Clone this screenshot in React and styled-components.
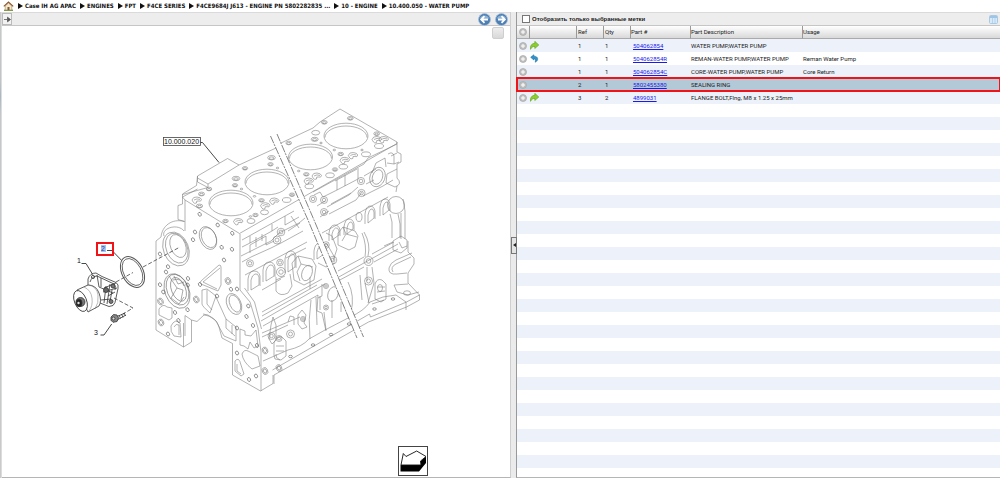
import React, { useState } from "react";
import styled, { createGlobalStyle } from "styled-components";

const GlobalStyle = createGlobalStyle`
  * { box-sizing: border-box; }
  body {
    margin: 0;
    background: #fff;
    color: #222;
    font-family: Roboto, "Liberation Sans", sans-serif;
    font-size: 6px;
  }
  button { font: inherit; padding: 0; cursor: pointer; }
`;

const Page = styled.div`
  display: flex;
  flex-direction: column;
  height: 100vh;
`;

const Breadcrumbs = styled.nav`
  display: flex;
  align-items: center;
  flex: none;
  height: 12px;
  padding-left: 3px;
  gap: 4px;
  font: bold 6px/12px "DejaVu Sans Condensed", "Noto Sans", sans-serif;
  white-space: nowrap;
`;

const HomeLink = styled.a`
  display: flex;
  width: 11px;
`;

const Crumb = styled.a`
  display: flex;
  align-items: center;
  gap: 2px;
  color: #111;
  text-decoration: none;
`;

const Workspace = styled.main`
  flex: 1;
  min-height: 0;
  display: grid;
  grid-template-columns: 2px minmax(0, 509fr) 5px minmax(0, 484fr);
  background: #ededed;
`;

const Edge = styled.div`
  background: linear-gradient(#c9c9c9, #c0c4c8 15%, #a9b8c6 18%, #c4c8cc 22%, #cacaca);
  border-right: 1px solid #dcdcdc;
`;

const Pane = styled.section`
  display: flex;
  flex-direction: column;
  min-height: 0;
  border-bottom: 1px solid #b5b5b5;
`;

const DiagramPane = styled(Pane)`
  border-right: 1px solid #cfcfcf;
`;

const PartsPane = styled(Pane)`
  border-left: 1px solid #999;
`;

const Toolbar = styled.div`
  display: flex;
  align-items: center;
  flex: none;
  height: 14px;
  gap: 4px;
  padding: 0 ${(p) => p.$end}px 0 ${(p) => p.$start}px;
  background: #ededed;
  border-top: 1px solid #dadada;
  border-bottom: 1px solid #c6c6c6;
`;

const Spacer = styled.span`
  flex: 1;
`;

const PinButton = styled.button`
  display: flex;
  align-items: center;
  justify-content: center;
  width: 10px;
  height: 12px;
  background: #f2f2f2;
  border: 1px solid #bbb;
`;

const RoundButton = styled.button`
  display: flex;
  width: 13px;
  height: 13px;
  border: 0;
  background: none;
`;

const Canvas = styled.div`
  position: relative;
  flex: 1;
  min-height: 0;
  background: #fff;
`;

const Drawing = styled.svg`
  display: block;
  width: 100%;
  height: 100%;
`;

const CanvasButton = styled.button`
  position: absolute;
  top: 1px;
  right: 6px;
  width: 12px;
  height: 12px;
  border: 1px solid #cfcfcf;
  border-radius: 2px;
  background: linear-gradient(#eee, #d8d8d8);
`;

const Splitter = styled.div`
  display: flex;
  align-items: center;
  background: #ebebeb;
`;

const SplitHandle = styled.button`
  position: relative;
  z-index: 1;
  display: flex;
  align-items: center;
  justify-content: center;
  flex: none;
  width: 6px;
  height: 17px;
  border: 1px solid #777;
  background: #e4e4e4;
`;

const FilterLabel = styled.label`
  display: flex;
  align-items: center;
  gap: 2px;
  font: bold 6px/12px "Liberation Sans", sans-serif;
  color: #222;
`;

const Tick = styled.input`
  appearance: none;
  width: 8px;
  height: 8px;
  margin: 0;
  border: 1px solid #777;
  background: #fff;
  &:checked { background: #5c92c4; }
`;

const IconButton = styled.button`
  display: flex;
  border: 0;
  background: none;
`;

const PartsTable = styled.table`
  flex: none;
  width: 100%;
  table-layout: fixed;
  border-collapse: separate;
  border-spacing: 0;
`;

const HeadCell = styled.th`
  height: 13px;
  padding: 0 0 0 ${(p) => p.$pad || 0}px;
  text-align: left;
  font-weight: normal;
  line-height: 12px;
  border-bottom: 1px solid #aaa;
  border-right: 1px solid #999;
  background: linear-gradient(#fff, #d9d9d9);
  white-space: nowrap;
  &:last-child { border-right: 0; }
`;

const Row = styled.tr`
  background: ${(p) => (p.$selected ? "#b4c9d8" : p.$tint ? "#edf2fa" : "#fff")};
  outline: ${(p) => (p.$selected ? "2px solid #f01418" : "none")};
  outline-offset: -1px;
`;

const Cell = styled.td`
  height: 13px;
  padding: 0 0 0 ${(p) => p.$pad || 0}px;
  line-height: 13px;
  white-space: nowrap;
`;

const PartLink = styled.a`
  color: #1a1aee;
  text-decoration: underline;
`;

const EmptyRows = styled.div`
  flex: 1;
  background: repeating-linear-gradient(#fff 0 13px, #edf2fa 13px 26px);
`;

const Icon = styled.svg`
  display: block;
`;

const crumbs = [
  "Case IH AG APAC",
  "ENGINES",
  "FPT",
  "F4CE SERIES",
  "F4CE9684J J613 - ENGINE PN 5802282835 ...",
  "10 - ENGINE",
  "10.400.050 - WATER PUMP",
];

const parts = [
  { ref: 1, qty: 1, number: "504062854", text: "WATER PUMP,WATER PUMP", usage: "", icon: "next" },
  { ref: 1, qty: 1, number: "504062854R", text: "REMAN-WATER PUMP,WATER PUMP", usage: "Reman Water Pump", icon: "back" },
  { ref: 1, qty: 1, number: "504062854C", text: "CORE-WATER PUMP,WATER PUMP", usage: "Core Return" },
  { ref: 2, qty: 1, number: "5802455380", text: "SEALING RING", usage: "", selected: true },
  { ref: 3, qty: 2, number: "4899031", text: "FLANGE BOLT,Flng, M8 x 1.25 x 25mm", usage: "", icon: "next" },
];

const HomeIcon = () => (
  <Icon width="11" height="10" viewBox="0 0 11 10">
    <path d="M1 9.3h9" stroke="#6a9c3a" strokeWidth="1.3" />
    <path d="M2.2 5v4h6.6V5L5.500 2z" fill="#f4e6c8" stroke="#a58a60" strokeWidth=".6" />
    <path d="M.8 5.400 5.500 1l4.700 4.400" fill="none" stroke="#8a5a35" strokeWidth="1.200" />
    <path d="M4.500 9V6h2v3z" fill="#7a5a3a" />
  </Icon>
);

const RoundArrow = ({ flip }) => (
  <Icon width="13" height="13" viewBox="0 0 13 13">
    <circle cx="6.500" cy="6.500" r="6" fill="#4d7fb5" stroke="#a9bfd6" strokeWidth=".8" />
    <path d="M1.800 5.500a5 4.500 0 0 1 9.400 0z" fill="#8db2d8" />
    <path
      d="M10 6.500H3.500M6.500 3.200 3.200 6.500l3.300 3.300"
      fill="none"
      stroke="#fff"
      strokeWidth="1.800"
      transform={flip ? "matrix(-1 0 0 1 13 0)" : undefined}
    />
  </Icon>
);

const Plus = () => (
  <Icon width="8" height="8" viewBox="0 0 8 8">
    <circle cx="4" cy="4" r="3.500" fill="#c0c0c0" stroke="#a8a8a8" strokeWidth=".7" />
    <path d="M4 2v4M2 4h4" stroke="#fff" strokeWidth="1" />
  </Icon>
);

const RowIcon = ({ kind }) =>
  kind === "next" ? (
    <Icon width="9" height="9" viewBox="0 0 9 9">
      <path d="M.4 8.400C0 4.500 2 2.300 4.800 2.300V.3l4 3.700-4 3.500V5.400C2.800 5.400 1.400 6.400.4 8.400z" fill="#8ccf2c" stroke="#5f9c1e" strokeWidth=".6" />
    </Icon>
  ) : (
    <Icon width="9" height="9" viewBox="0 0 9 9">
      <path d="M3.800.8.7 3.300l3.100 2.700V4.700c1.500 0 2 1 1.400 3.500C8.700 6.700 8.700 2.200 3.800 2.200z" fill="#2f93cc" stroke="#1e6d9f" strokeWidth=".6" />
    </Icon>
  );

const GridIcon = () => (
  <Icon width="9" height="9" viewBox="0 0 9 9">
    <rect x=".5" y=".5" width="8" height="8" rx="1" fill="#d8e9f8" stroke="#a9c8e4" />
    <path d="M1 2h7" stroke="#8bb8df" strokeWidth="1.500" />
    <path d="M3.500 3v5M6 3v5" stroke="#a9cdec" strokeWidth=".8" />
  </Icon>
);

/* Centres of the four cylinder bores on the deck. */
const bores = [[231, 203], [267, 182], [310.5, 157], [346, 136]];

/* Deck passages: x, y, rx, ry. */
const deckHoles = [
  [209, 189, 2.8, 1.8], [201.500, 194, 3, 1.9], [199.500, 206, 3.200, 1.9], [236, 178.500, 3.800, 2.200], [235, 185.300, 2.700, 1.700],
  [245, 168.300, 2.700, 1.700], [241.500, 189, 1.300, .8], [254.500, 196.300, 1.300, .8], [261.500, 200.300, 2.800, 1.700],
  [264.500, 212.300, 4, 2.400], [255.500, 215, 2.700, 1.700], [250.500, 216.500, 1.300, .8], [251, 221, 4, 2.500], [225.500, 221, 2.800, 1.700],
  [271.500, 157.700, 3.800, 2.200], [270.500, 164.300, 2.700, 1.700], [277.500, 168, 1.300, .8], [324.300, 122.300, 2.900, 1.800],
  [350.300, 118.300, 2.900, 1.800], [376.700, 133.700, 2.900, 1.800], [379, 146, 4.500, 2.500], [315.700, 132.700, 4, 2.300],
  [314.700, 139.300, 3.500, 2], [288.700, 143, 2.800, 1.800], [321, 143, 1.300, .8], [334.300, 150, 1.300, .8], [362, 150, 1.300, .8],
  [366, 154.300, 4.500, 2.400], [340.700, 154, 2.800, 1.700], [343.300, 166.700, 4.300, 2.300], [335, 169.500, 2.700, 1.700],
  [330, 175.300, 4.300, 2.400], [309.300, 186.300, 4.300, 2.400], [306.300, 174.300, 2.800, 1.700], [298.700, 171, 1.300, .8],
  [286.700, 200, 4.300, 2.400], [292, 194.700, 2.700, 1.700],
];

const kidneys = [[197, 200], [265.500, 205.700], [274.500, 201], [238.500, 221.500], [353.300, 155.500], [345, 160.300], [317, 176], [309, 181], [377, 139.500], [384, 139.500]];

/* Bolt holes on the front face. */
const faceHoles = [
  [199.700, 214.300], [217.700, 225], [232.300, 233.300], [195, 232], [193, 239.700], [221.700, 247.300], [232, 249.300], [160, 254],
  [224, 260], [168, 266.700], [166, 272], [160, 284.700], [163.300, 292], [188, 278.500], [187.700, 285], [200, 284.500], [217, 296],
  [231, 289.300], [237, 289], [187.500, 309.700], [175, 312.500], [178.500, 320.500], [248.300, 306], [246.500, 316.500], [253, 325.500],
  [237, 328], [237, 353], [257, 345.500], [168, 334], [256, 376], [249, 379.500],
];

const wideFaceHoles = [[228, 281], [196.300, 299.500], [160.500, 301.500], [161, 322.500], [265, 350.500], [265, 371], [279, 368]];

/* Bosses on the side: x, y, r. */
const bosses = [
  [250, 263.300, 3.500], [281, 272, 4.500], [281, 232, 3.800], [277, 240, 4], [361, 181, 3.600], [361.500, 193, 3.600], [324, 200, 3.500],
  [324, 212, 3.500], [313, 199, 3.500], [280, 262.500, 3.300], [368.500, 261, 4.500], [368.500, 281, 4], [290.500, 334, 4], [279, 338.500, 3],
  [333, 260, 3.800], [271.500, 336, 3.500], [326, 307.500, 2.500], [326, 286, 2.500], [303, 319, 2.500], [326, 245, 3.300],
];

const railHoles = [[290.500, 356.500], [313, 345], [331, 334.500], [349, 324], [374.500, 309], [393, 299]];

/* Arched windows along the water jacket: x, y, w, h. */
const arches = [[248, 271, 12, 20], [263, 262, 12, 20], [285, 251, 11, 22], [314, 243, 11, 17], [329, 225, 11, 16], [344, 219, 10, 16], [365, 206, 10, 18], [380, 199, 10, 17]];

const Engine = () => (
  <g fill="none" stroke="#808080" strokeWidth=".6" strokeLinejoin="round">
    <path d="M185 200 182.500 197V194l14-8.500 1-9.500 30-17.500 11.500 6.500L276 148l5-5 32-15 7-6 20-13 57 33v1.500L239.500 233.500 185 200" />
    <path d="M197.500 176v6l10.500 5.500v-3.500L197.500 178M208 184l31-19M182.500 194.500l25.500-7M182.500 197l15-8M182.500 197v7l-4.500 1.500v14l6.500 2M185 200v31" />
    {bores.map(([x, y]) => (
      <g key={x}>
        <ellipse cx={x} cy={y} rx="22" ry="12.800" />
        <path d={`M${x - 21} ${y + 1.500}a21 11.500 0 0 1 42 0`} />
      </g>
    ))}
    {deckHoles.map(([x, y, rx, ry]) => (
      <g key={`${x}-${y}`}>
        <ellipse cx={x} cy={y} rx={rx} ry={ry} />
        {rx > 2 && rx < 3.900 && <ellipse cx={x} cy={y + 0.400} rx={rx * 0.600} ry={ry * 0.550} />}
      </g>
    ))}
    {kidneys.map(([x, y]) => (
      <path key={`${x}-${y}`} d={`M${x - 5} ${y}q1-3.500 5-3t4.500 2.500q-.5 2.500-3 1.500t-2 2q-2 1-3-.5t-1.500-2.500M${x - 3} ${y}q3-2 6-.5`} />
    ))}

    <path d="M184.500 221.500C172 218 162 226 161 237l-5 4v89l27.500 17 8-5v-22l-6.500-4.500V336M183.500 347v-24M191.500 320l5.500 1.500 7-6.500c8 1 13 5 15 12l3 11 10.500 5.500V375l28 16 12.500-7.500V375M261 391V352" />
    <path d="M240 234v56l10 12 8 26 3 24M244.500 288l10 14 7 27M164 236c-3-8 14-13 20-5" />
    <g transform="rotate(-22 176 249)">
      <ellipse cx="176" cy="249" rx="12.500" ry="17.500" />
      <ellipse cx="177" cy="248.500" rx="10.500" ry="15.500" />
      <ellipse cx="179" cy="247" rx="7.500" ry="12" />
    </g>
    <g transform="rotate(-22 177 291)" stroke="#707070">
      <ellipse cx="177" cy="291" rx="12" ry="18" />
      <ellipse cx="178" cy="290" rx="10.500" ry="16" />
      <ellipse cx="179" cy="290" rx="7" ry="12.500" />
    </g>
    <path d="M169 276l8 12-6 10M177 288l6 2-2 10M173 280q8-3 11 6M171 298l8 6 5-7M174 276l4 8 6-2" stroke="#707070" />
    <g transform="rotate(-24 208 238)">
      <ellipse cx="208" cy="238" rx="8" ry="12" />
      <ellipse cx="209" cy="238" rx="7" ry="10.500" />
    </g>
    <g transform="rotate(-24 234 304)">
      <ellipse cx="234" cy="304" rx="7" ry="11" />
      <ellipse cx="235" cy="304" rx="5" ry="9" />
    </g>
    <path d="M219 265q2 0 2 2v18l-3 6-17-7q-2-1 0-3zM220 268l-17 14 14 7" />
    <path d="M202 290l5-1 9 7-6 17q-8-7-8-9zM207 290v14l5 6M216 297l10 22 10 8v14l-12-5-8-15-8-6-5-1M226 319v9l9 8M232 325v9" />
    <path d="M159 309q4-6 8-2l5 1v10l-3 2-10-5zM171 326q4-8 9-3l1 14-7-1q-4-4-3-10M174 327q2-4 5-2v10" />
    <path d="M240 329l5 2v4l6 1 5-6 2 16-4 2-4-6-2 7-4-3-4-1zM242 354q2-5 6-3l10 5 2 10-8 3q-9-7-10-15M235 361q4-5 6 4l3 9-3 2-6-5zM237 364v7l4 3" />
    {faceHoles.map(([x, y]) => (
      <ellipse key={`${x}-${y}`} cx={x} cy={y} rx="1.500" ry="2" stroke="#555" transform={`rotate(-25 ${x} ${y})`} />
    ))}
    {wideFaceHoles.map(([x, y]) => (
      <g key={`${x}-${y}`} transform={`rotate(-25 ${x} ${y})`}>
        <ellipse cx={x} cy={y} rx="2.700" ry="3.500" />
        <ellipse cx={x} cy={y} rx="1.500" ry="2.200" />
      </g>
    ))}

    <path d="M242 240l52-29M242 247l8-4v-7M250 243l22-12v-7M272 231l6-4M241 256l30-15 8-8 20-10 6-5M250 253v-8l16-9v9M242 262l9-5 20-9 10-5 22-12M266 245l8-4M285 216v9l14-8M256 237v10M262 234v7M288 231l12-8M291 216l8 12" />
    <path d="M313 192l51-28 4-6 29-14M314 195l6-3 3 5 14-7v-10M337 190l21-11v-11M345 186v-11M327 207l22-12 9-8M329 214l27-14 6-8M317 206l8-5M320 217l9-6M331 204l20-11M335 181l22-12M364 176l12-7M366 184l8-4M363 196l20-10 10-6M372 173l4-10 9-5 1 9" />
    <ellipse cx="377.500" cy="177" rx="7.500" ry="10" transform="rotate(20 377.500 177)" />
    <ellipse cx="377.500" cy="177" rx="5" ry="7.500" transform="rotate(20 377.500 177)" />
    <path d="M397 142v10l4 2v8l-4 2v14q6 6-2 9l-9-4 1-9 10-5M388 154q5-3 6 2v8l-7-1M396 192l1-6M391 156l6-3M394 164l5-2" />
    <circle cx="396" cy="205" r="8.500" />
    <path d="M245 275l62-33M322 233l66-36M306 248l-20 10M403 199l2 12v28M401 213v26M407 240v8l-6 5-8-3v-9l8-5zM393 242l-9 4M399 242l3 6 5-2M390 214l2 8v16M398 214l2 10v14" />
    {arches.map(([x, y, w, h]) => (
      <path key={x} d={`M${x} ${y + h}V${y + 8}q1-8 ${w / 2}-8t${w / 2} 5v${h - 10}M${x + 3} ${y + h - 1}V${y + 9}q1-5 ${w / 2 - 2}-6t${w / 2 - 2} 3v${h - 12}z`} />
    ))}
    <path d="M292 263l6-7 14 3 4 7-2 14-10 5-10-5zM298 256l3 8 12 3M301 264l-4 8 3 9M338 233l5-6 12 4 3 5-3 11-6 3-11-5zM343 227l3 7 11 3M346 234l-4 7M276 277v14q4 6 12 2l4-7-2-12M276 280l9-4M262 290l19-11" />
    <ellipse cx="307" cy="273" rx="5" ry="8" transform="rotate(20 307 273)" />
    <ellipse cx="359" cy="217" rx="3" ry="4.500" />
    <path d="M326 233l6 3 5 13-4 12M319 248l8-4 8 14M318 263l8 4 9-4M310 277v12" />

    <path d="M262 312l60-33M262 316l55-31M261 321l64-37M263 326l55-31M337 278l61-34M338 281l26-14M374 262l24-13M338 271l26-14M372 254l22-12M318 295l-1 16 5 2 4 18M322 284v12l-4 2M320 296v14M324 312l2 18" />
    <path d="M362 233q5 12 3 24M364 232q7 12 4 24M367 267v14M372 267l2 16-6 20M365 283l4 20M360 275l2 25M337 287l12 32M348 282q7 14 3 30M311 300q-3 20-1 39M316 297l1 28M332 300v18M341 302v10" />
    <ellipse cx="333" cy="294" rx="5" ry="7.500" transform="rotate(20 333 294)" />
    <path d="M407 273l-10 1q-9 1-8-6 1-5 7-8l16-7M393 272q-3-5 3-8l15-7M408 241v11l6 6v6l-6 9v10l11.500 12v5l-13 7-38 15-94.500 53v9M419.500 295l-13 7-36 15-1-3-97 56" />
    <path d="M288 350q14-3 21-11l16-9 25-13q14-6 20-15l13-5 13-2 10 7v8M263 361l25-11M372 304l12-4M394 285l14-1M394 285l3 7 11 3 11-3" />
    <path d="M375 299v-15q2-6 7-4l4 4v15l-5 3zM377 287h8M377 292l8-1M274 355v-12q3-8 8-6l4 4v15l-5 4-6-1zM276 346h8M276 351h8M280 360q-5-2-4-6M298 315l4-5 4 5-2 8 3 4-5 2-4-5zM262 333l38-16M262 337l26-12M288 322l2-6 4 1v8M271 325l2-8 3 8v15l-4 4-3-5z" />
    <ellipse cx="407" cy="293" rx="3.500" ry="2.200" />
    <ellipse cx="380" cy="288" rx="2.500" ry="3.500" />
    {bosses.map(([x, y, r]) => (
      <g key={`${x}-${y}`}>
        <circle cx={x} cy={y} r={r} />
        <circle cx={x} cy={y} r={r * 0.500} />
      </g>
    ))}
    {railHoles.map(([x, y]) => (
      <ellipse key={x} cx={x} cy={y} rx="1.800" ry="1.200" stroke="#555" />
    ))}
    <path d="M270 135 308 220 357 338 363 337 314 220 277 134z" fill="#fff" stroke="none" />
    <path d="M270.500 136 308 220l49 118M277 134l37 86 49.500 117" stroke="#666" strokeWidth=".8" strokeDasharray="8 1 2 1" />
  </g>
);

const Pump = () => (
  <g fill="none" stroke="#333" strokeWidth=".8" strokeLinejoin="round">
    <path d="M88 286v-7q2-6 8-6l6 3.500 14 6q3 2 2 6l-3 14q-1 4-6 4l-9-3.500" fill="#fff" />
    <path d="M90 282q2-6 7-6l17 8q2 2 1 6M97 275l2 12M101 278v9M104 288l12-5M103 292l14-4M106 286l-2 17M110 284l-3 20M112 290l-2 12M99 287l14 6M108 296l7-4M101 300l10-1" />
    <circle cx="113" cy="286" r="2" fill="#777" />
    <circle cx="111" cy="301.500" r="2" fill="#777" />
    <circle cx="93" cy="277" r="1.600" />
    <circle cx="106" cy="290" r="2.500" fill="#666" />
    <path d="M77 290l11-5q8 0 11 8t0 13l-11 6z" fill="#fff" />
    <path d="M89 285q8 2 9 10t-3 14M84 287q7 3 8 11t-3 13" stroke="#777" strokeWidth=".5" />
    <ellipse cx="80.500" cy="301" rx="6" ry="11" fill="#fff" transform="rotate(-22 80.500 301)" />
    <circle cx="80.500" cy="302" r="4.500" fill="#777" />
    <ellipse cx="79" cy="303" rx="3" ry="3.800" fill="#222" />
    <circle cx="78.500" cy="303" r="1.200" fill="#ddd" stroke="none" />
    <g transform="rotate(-28 132.500 272)" stroke="#555">
      <ellipse cx="132.500" cy="272" rx="10.500" ry="16.500" strokeWidth="1" />
      <ellipse cx="132.500" cy="272" rx="8.800" ry="14.500" strokeWidth=".8" />
    </g>
    <path d="M116 282l17-9.500M143 267l37-20M114 298l19 10-10 6" stroke="#444" strokeDasharray="4 2" />
    <path d="M116 317l9-4M117 320l9-5M119 315l1.500 3.500M121.500 314l1.500 3.500M124 313l1.500 3" />
    <path d="M111 317l2.500-2.500 3.500.5 1.500 3-1.500 3.500-4 .8-2-2z" fill="#888" />
    <circle cx="113.500" cy="318.500" r="1.500" fill="#ddd" />
    <path d="M81.500 263.500H86l6.700 11M100.500 335h3.500l7.700-11M107 250.500h5l9.700 10M200 142.500h2.500l16.500 20" strokeWidth=".9" />
  </g>
);

const DiagramText = styled.text`
  font: 7px "Liberation Sans", sans-serif;
  fill: ${(p) => (p.$marked ? "#2848a0" : "#111")};
`;

const Diagram = () => (
  <Drawing viewBox="2 26 508 451" role="img" aria-label="Water pump assembly">
    <Engine />
    <Pump />
    <rect x="163.500" y="137.500" width="37" height="8" fill="#fff" stroke="#444" strokeWidth=".8" />
    <DiagramText x="164" y="144">10.000.020</DiagramText>
    <DiagramText x="77" y="263">1</DiagramText>
    <DiagramText x="94" y="335">3</DiagramText>
    <rect x="101" y="245" width="5" height="7" fill="#a9c2ee" />
    <DiagramText $marked x="101" y="251">2</DiagramText>
    <rect x="97" y="243" width="16" height="12" fill="none" stroke="#f01418" strokeWidth="2" />
    <rect x="398.500" y="446.500" width="29" height="29" fill="#fff" stroke="#444" />
    <path d="M400.500 465h18.500v6.500h-18.500zM419 465l1.500-4 5.500-4.500v6.500l-7 8.500z" fill="#000" />
    <path d="M401 465l2.300-11.500 2.700 3 10.700-5.500 9.300 5.500-5.500 4.500.5 4z" fill="#fff" stroke="#111" strokeWidth=".9" />
  </Drawing>
);

export default function App() {
  const [onlyMarked, setOnlyMarked] = useState(false);
  return (
    <>
      <GlobalStyle />
      <Page>
        <Breadcrumbs>
          <HomeLink href="#home" aria-label="Home"><HomeIcon /></HomeLink>
          {crumbs.map((c) => (
            <Crumb key={c} href="#crumb">
              <Icon width="5" height="6" viewBox="0 0 5 6"><path d="M0 0l5 3-5 3z" fill="#111" /></Icon>
              {c}
            </Crumb>
          ))}
        </Breadcrumbs>
        <Workspace>
          <Edge />
          <DiagramPane>
            <Toolbar $start={0} $end={2}>
              <PinButton aria-label="Show panel">
                <Icon width="7" height="7" viewBox="0 0 7 7"><path d="M0 3.500h3.500V1.200L6.500 3.500l-3 2.300V3.500" fill="#555" stroke="#555" strokeWidth=".8" /></Icon>
              </PinButton>
              <Spacer />
              <RoundButton aria-label="Previous"><RoundArrow /></RoundButton>
              <RoundButton aria-label="Next"><RoundArrow flip /></RoundButton>
            </Toolbar>
            <Canvas>
              <Diagram />
              <CanvasButton aria-label="View options" />
            </Canvas>
          </DiagramPane>
          <Splitter>
            <SplitHandle aria-label="Collapse panel">
              <Icon width="3" height="4" viewBox="0 0 3 4"><path d="M3 0v4L0 2z" fill="#222" /></Icon>
            </SplitHandle>
          </Splitter>
          <PartsPane>
            <Toolbar $start={5} $end={2}>
              <FilterLabel>
                <Tick type="checkbox" checked={onlyMarked} onChange={(e) => setOnlyMarked(e.target.checked)} />
                Отобразить только выбранные метки
              </FilterLabel>
              <Spacer />
              <IconButton aria-label="Columns"><GridIcon /></IconButton>
            </Toolbar>
            <PartsTable>
              <colgroup>
                <col style={{ width: 13 }} />
                <col style={{ width: 47 }} />
                <col style={{ width: 27 }} />
                <col style={{ width: 27 }} />
                <col style={{ width: 60 }} />
                <col style={{ width: 112 }} />
                <col />
              </colgroup>
              <thead>
                <tr>
                  <HeadCell $pad={2}><Plus /></HeadCell>
                  <HeadCell />
                  <HeadCell $pad={1}>Ref</HeadCell>
                  <HeadCell $pad={1}>Qty</HeadCell>
                  <HeadCell>Part #</HeadCell>
                  <HeadCell>Part Description</HeadCell>
                  <HeadCell>Usage</HeadCell>
                </tr>
              </thead>
              <tbody>
                {parts.map((p, i) => (
                  <Row key={p.number} $tint={i % 2 === 0} $selected={p.selected}>
                    <Cell $pad={2}><Plus /></Cell>
                    <Cell>{p.icon && <RowIcon kind={p.icon} />}</Cell>
                    <Cell $pad={1}>{p.ref}</Cell>
                    <Cell $pad={1}>{p.qty}</Cell>
                    <Cell $pad={2}><PartLink href="#part">{p.number}</PartLink></Cell>
                    <Cell>{p.text}</Cell>
                    <Cell>{p.usage}</Cell>
                  </Row>
                ))}
              </tbody>
            </PartsTable>
            <EmptyRows />
          </PartsPane>
        </Workspace>
      </Page>
    </>
  );
}
